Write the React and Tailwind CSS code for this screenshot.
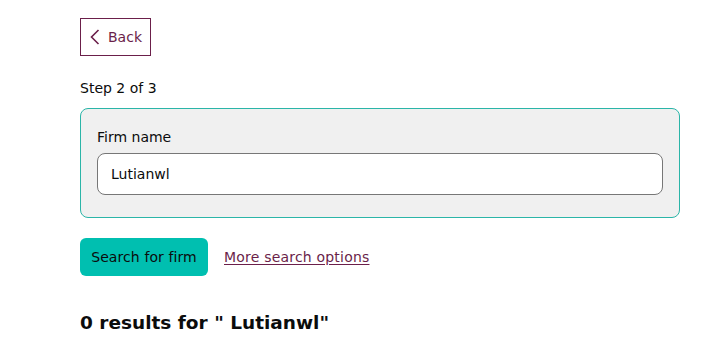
import { useState } from 'react';

function App() {
  const [firmName, setFirmName] = useState('Lutianwl');

  return (
    <div className="min-h-screen bg-white font-['DejaVu_Sans',Verdana,sans-serif] text-[#0b0c0c]">
      <div className="w-[600px] ml-[80px] pt-[18px]">
        <button className="flex items-center gap-[8px] h-[38px] w-[71px] pl-[9px] border border-[#6b1f4a] text-[#6b1f4a] text-[14px]">
          <svg width="10" height="16" viewBox="0 0 10 16" fill="none" stroke="currentColor" strokeWidth="1.6">
            <path d="M8.5 1 L1.5 8 L8.5 15" />
          </svg>
          <span>Back</span>
        </button>

        <p className="mt-[22px] text-[14px] leading-[20px]">Step 2 of 3</p>

        <div className="mt-[10px] h-[110px] bg-[#f0f0f0] border border-[#2bb5a8] rounded-[8px] px-[16px] pt-[18px]">
          <label className="block text-[14px] leading-[20px]">Firm name</label>
          <input
            value={firmName}
            onChange={(e) => setFirmName(e.target.value)}
            className="mt-[6px] w-full h-[42px] px-[13px] bg-white border border-[#777] rounded-[8px] text-[14px] focus:outline-none"
          />
        </div>

        <div className="mt-[20px] flex items-center gap-[16px]">
          <button className="h-[38px] w-[128px] bg-[#00bfb0] rounded-[6px] text-[14px] text-[#0b0c0c] tracking-[0.1px]">
            Search for firm
          </button>
          <a href="#" className="text-[14px] text-[#6b1f4a] underline underline-offset-2 tracking-[0.2px]">More search options</a>
        </div>

        <h2 className="mt-[34px] text-[18.5px] font-bold leading-[26px]">0 results for " Lutianwl"</h2>
      </div>
    </div>
  );
}

export default App;
